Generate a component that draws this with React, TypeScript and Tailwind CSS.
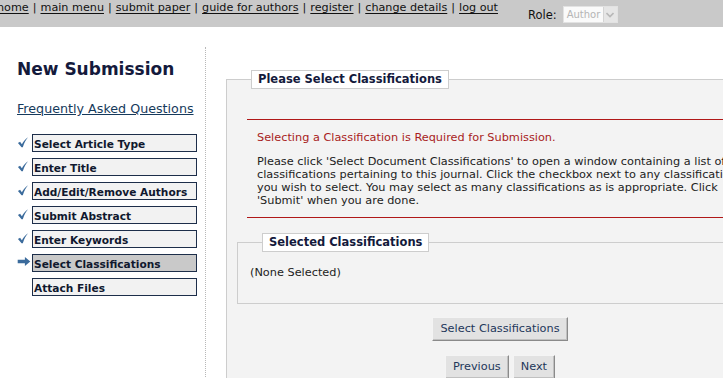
import React from "react";

const steps = [
  { label: "Select Article Type", state: "done" },
  { label: "Enter Title", state: "done" },
  { label: "Add/Edit/Remove Authors", state: "done" },
  { label: "Submit Abstract", state: "done" },
  { label: "Enter Keywords", state: "done" },
  { label: "Select Classifications", state: "current" },
  { label: "Attach Files", state: "todo" },
];

const navLinks = ["home", "main menu", "submit paper", "guide for authors", "register", "change details", "log out"];

const Check = () => (
  <svg width="12" height="11" viewBox="0 0 12 12">
    <path d="M0.5 6.5 L2.8 5.3 L4.8 7.8 C6.4 4.8 8.4 2.4 11.5 0.3 C9.2 3 7.2 6.2 5.8 11.3 L4.4 11.3 Z" fill="#3b6b9c" />
  </svg>
);

const Arrow = () => (
  <svg width="14" height="9" viewBox="0 0 14 10">
    <path d="M0 3 H8 V0 L14 5 L8 10 V7 H0 Z" fill="#3b6b9c" />
  </svg>
);

const Button = ({ children }: { children: React.ReactNode }) => (
  <button className="h-[24px] px-[7px] bg-[#e2e2e2] text-[#23375a] text-[11.3px] border border-t-[#f4f4f4] border-l-[#f4f4f4] border-r-[#8a8a8a] border-b-[#8a8a8a] shadow-[inset_-1px_-1px_0_#c0c0c0]">
    {children}
  </button>
);

const App = () => {
  return (
    <div className="w-[723px] h-[378px] overflow-hidden bg-white font-['DejaVu_Sans',Verdana,sans-serif] text-[11.3px] text-[#222]">
      {/* top bar */}
      <div className="h-[27px] bg-[#c9c9c9] flex">
        <div className="ml-[-3px] mt-[1px] w-[531px] text-[11.2px] leading-[14px] text-[#111] whitespace-nowrap">
          {navLinks.map((l, i) => (
            <span key={l}>
              {i > 0 && <span className="mx-[4px]">|</span>}
              <span className="underline underline-offset-2">{l}</span>
            </span>
          ))}
        </div>
        <div className="text-[11.5px] text-[#111] mt-[-11px] leading-[14px]">
          <div>Username: smith2110</div>
          <div className="flex items-center mt-[3px]">
            <span>Role:</span>
            <div className="ml-[6px] flex h-[17px] w-[55px] border border-[#e2e2e2] bg-[#fafafa]">
              <span className="flex-1 pl-[3px] text-[10px] leading-[15px] text-[#b5b5b5]">Author</span>
              <span className="w-[14px] bg-[#e6e6e6] border-l border-[#d4d4d4] flex items-center justify-center">
                <svg width="8" height="6" viewBox="0 0 8 6">
                  <path d="M0.5 1 L4 4.5 L7.5 1" stroke="#b8b8b8" strokeWidth="1.6" fill="none" />
                </svg>
              </span>
            </div>
          </div>
        </div>
      </div>

      <div className="flex">
        {/* sidebar */}
        <div className="w-[206px] shrink-0 mt-[20px] h-[340px] border-r border-dotted border-[#b8b8b8] pl-[17px]">
          <h1 className="mt-[13px] text-[17px] leading-[18px] font-bold text-[#141a3c]">New Submission</h1>
          <a className="block mt-[23px] text-[12.7px] leading-[15px] text-[#163a5c] underline">
            Frequently Asked Questions
          </a>
          <ul className="mt-[18px]">
            {steps.map((s) => (
              <li key={s.label} className="flex items-start h-[24px]">
                <span className="w-[15px] flex justify-start pt-[3px]">
                  {s.state === "done" && <Check />}
                  {s.state === "current" && <Arrow />}
                </span>
                <span
                  className={
                    "w-[165px] h-[18px] border border-[#1d2e4a] pl-[1px] pt-[1px] text-[10.6px] font-bold text-[#10182e] leading-[16px] " +
                    (s.state === "current" ? "bg-[#c9c9c9]" : "bg-[#f2f2f2]")
                  }
                >
                  {s.label}
                </span>
              </li>
            ))}
          </ul>
        </div>

        {/* main */}
        <div className="ml-[20px] mt-[43px] w-[548px] shrink-0">
          <fieldset className="border border-[#cdcdcd] bg-[#f3f3f3] pb-[40px]">
            <legend className="ml-[24px] bg-white border border-[#cdcdcd] px-[6px] h-[19px] text-[11.5px] leading-[17px] font-bold text-[#141a3c]">
              Please Select Classifications
            </legend>
            <div className="ml-[20px] mt-[30px] border-y border-[#b01818] pl-[10px] pt-[11px] pb-[10px] whitespace-nowrap">
              <p className="text-[#a81c1c] leading-[13px]">Selecting a Classification is Required for Submission.</p>
              <p className="mt-[11px] leading-[13px]">
                Please click 'Select Document Classifications' to open a window containing a list of
                <br />
                classifications pertaining to this journal. Click the checkbox next to any classification
                <br />
                you wish to select. You may select as many classifications as is appropriate. Click
                <br />
                'Submit' when you are done.
              </p>
            </div>
            <fieldset className="ml-[10px] mt-[15px] border border-[#cdcdcd] pb-[24px]">
              <legend className="ml-[24px] bg-white border border-[#cdcdcd] px-[6px] h-[19px] text-[11.5px] leading-[17px] font-bold text-[#141a3c]">
                Selected Classifications
              </legend>
              <p className="pl-[12px] pt-[14px] leading-[13px]">(None Selected)</p>
            </fieldset>
            <div className="flex justify-center mt-[13px]">
              <Button>Select Classifications</Button>
            </div>
            <div className="flex justify-center gap-[4px] mt-[14px]">
              <Button>Previous</Button>
              <Button>Next</Button>
            </div>
          </fieldset>
        </div>
      </div>
    </div>
  );
};

export default App;
